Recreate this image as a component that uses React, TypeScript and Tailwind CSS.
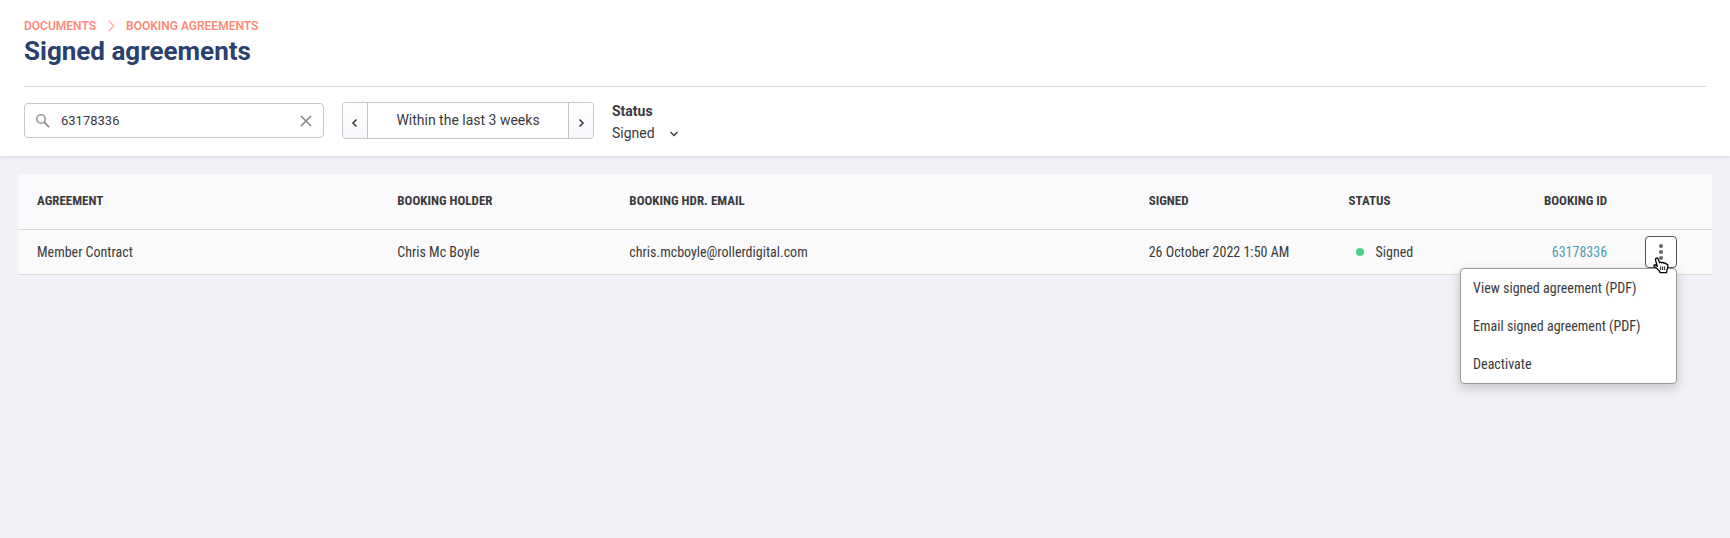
import { useState } from "react";

interface Agreement {
  name: string;
  holder: string;
  email: string;
  signed: string;
  status: string;
  bookingID: string;
}

const agreements: Agreement[] = [
  {
    name: "Member Contract",
    holder: "Chris Mc Boyle",
    email: "chris.mcboyle@rollerdigital.com",
    signed: "26 October 2022 1:50 AM",
    status: "Signed",
    bookingID: "63178336",
  },
];

const actions = [
  "View signed agreement (PDF)",
  "Email signed agreement (PDF)",
  "Deactivate",
];

function Chevron({ className, d }: { className: string; d: string }) {
  return (
    <svg
      viewBox="0 0 12 12"
      fill="none"
      stroke="currentColor"
      className={className}
      aria-hidden="true"
    >
      <path d={d} />
    </svg>
  );
}

function HandCursor() {
  return (
    <svg
      viewBox="0 0 16 17"
      className="pointer-events-none absolute top-5 left-2 z-20 h-[18px] w-4"
      aria-hidden="true"
    >
      <path
        d="M4.3 9.8 2.7 4.2C2 1.6 4.3.4 5.2 2.6L6.6 6.4c.4-1.1 1.8-1 2.2 0 .5-.8 1.8-.6 2.1.4.8-.6 2-.2 2.2.9.9-.3 1.8.3 1.8 1.5.1 1.9-.4 3-1 4.4l-.3 2.6H7l-.4-1.6C5.2 13.2 3.8 11.6 1.3 10 .5 9.1 1.3 7.9 2.5 8.4z"
        fill="#fff"
        stroke="#000"
        strokeWidth="1.3"
        strokeLinejoin="round"
      />
      <path d="M7.7 10v3.5M9.7 10v3.5M11.7 10v3.5" stroke="#000" strokeWidth=".9" />
    </svg>
  );
}

function Header() {
  const [search, setSearch] = useState("63178336");

  return (
    <header className="relative bg-white px-6 pt-4 shadow-[0_1px_4px_rgba(40,45,80,0.16)]">
      <nav className="flex items-center text-xs leading-5 font-semibold text-[#ff8a7a] uppercase">
        <a href="#documents">Documents</a>
        <Chevron className="mx-2 size-3.5 text-[#ffa79b]" d="M4 1.5 8.5 6 4 10.5" />
        <a href="#booking-agreements">Booking agreements</a>
      </nav>
      <h1 className="text-[26px] leading-[30px] font-bold text-[#2a406e]">
        Signed agreements
      </h1>
      <div className="mt-5 flex h-[70px] items-center border-t border-[#d9dadc] pb-0.5">
        <label className="flex h-[35px] w-[300px] items-center rounded border border-[#c6c6c8] px-[11px]">
          <svg viewBox="0 0 14 14" fill="none" stroke="#999" className="size-3.5 shrink-0" aria-hidden="true">
            <circle cx="5" cy="5" r="4.2" strokeWidth="1.6" />
            <path d="m8 8 5.2 5.2" strokeWidth="2" />
          </svg>
          <input
            type="text"
            aria-label="Search agreements"
            value={search}
            onChange={(e) => setSearch(e.target.value)}
            className="ml-[11px] min-w-0 flex-1 text-[13px] outline-none"
          />
          <button type="button" aria-label="Clear search" onClick={() => setSearch("")}>
            <Chevron className="size-3 stroke-[1.6] text-[#888]" d="m1 1 10 10M11 1 1 11" />
          </button>
        </label>
        <div className="ml-[18px] flex h-[37px] w-[252px] overflow-hidden rounded border border-[#c6c6c8]">
          <button
            type="button"
            aria-label="Previous period"
            className="flex w-[25px] items-center justify-center border-r border-[#c6c6c8] bg-linear-to-b from-white to-[#f6f7fb]"
          >
            <Chevron className="mt-1 size-3 stroke-[1.6]" d="M7.5 2.5 4 6l3.5 3.5" />
          </button>
          <button type="button" className="flex-1 pb-0.5 text-sm">
            Within the last 3 weeks
          </button>
          <button
            type="button"
            aria-label="Next period"
            className="flex w-[25px] items-center justify-center border-l border-[#c6c6c8] bg-linear-to-b from-white to-[#f6f7fb]"
          >
            <Chevron className="mt-1 size-3 stroke-[1.6]" d="M4.5 2.5 8 6 4.5 9.5" />
          </button>
        </div>
        <div className="ml-[18px] flex flex-col pt-0.5 text-sm leading-[22px]">
          <label htmlFor="status" className="font-bold">
            Status
          </label>
          <div className="relative w-[68px]">
            <select id="status" className="w-full appearance-none outline-none">
              <option>Signed</option>
              <option>Unsigned</option>
            </select>
            <Chevron
              className="pointer-events-none absolute top-1.5 right-0 size-3 stroke-[1.4]"
              d="M2.5 4 6 7.5 9.5 4"
            />
          </div>
        </div>
      </div>
    </header>
  );
}

function ActionMenu() {
  const [open, setOpen] = useState(true);

  return (
    <div className="relative ml-7 size-8">
      <button
        type="button"
        aria-label="Agreement actions"
        aria-expanded={open}
        onClick={() => setOpen(!open)}
        className="flex size-8 items-center justify-center rounded border border-[#555] bg-white"
      >
        <svg viewBox="0 0 4 16" fill="#666" className="h-4 w-1" aria-hidden="true">
          <circle cx="2" cy="2" r="2" />
          <circle cx="2" cy="8" r="2" />
          <circle cx="2" cy="14" r="2" />
        </svg>
      </button>
      <HandCursor />
      {open && (
        <div
          role="menu"
          className="absolute top-8 right-0 z-10 w-[217px] rounded border border-[#999] bg-white shadow-[0_4px_12px_rgba(0,0,0,0.2)]"
        >
          {actions.map((action) => (
            <button
              key={action}
              type="button"
              role="menuitem"
              className="block h-[38px] w-full px-3 text-left"
            >
              {action}
            </button>
          ))}
        </div>
      )}
    </div>
  );
}

export default function App() {
  return (
    <div className="min-h-screen bg-[#f1f2f8] font-[Roboto,'Liberation_Sans',sans-serif] text-[#3a3a3c]">
      <Header />
      <main className="p-[18px]">
        <table className="w-full table-fixed text-left font-['Roboto_Condensed','Roboto','Liberation_Sans',sans-serif] text-sm">
          <thead className="bg-[#fafafd] text-[13px] uppercase">
            <tr className="h-[55px] border-b border-[#d9dadc]">
              <th className="w-[21.8%] pl-[19px]">Agreement</th>
              <th className="w-[13.7%] pl-2.5">Booking holder</th>
              <th className="w-[30.6%] pl-2.5">Booking hdr. email</th>
              <th className="w-[11.8%] pl-[11px]">Signed</th>
              <th className="w-[7.7%] pl-[11px]">Status</th>
              <th className="w-[8.8%] pr-2.5 text-right">Booking ID</th>
              <th className="w-[5.6%]" aria-label="Actions"></th>
            </tr>
          </thead>
          <tbody>
            {agreements.map((a) => (
              <tr key={a.bookingID} className="h-[45px] border-b border-[#d9dadc] bg-[#fafafa]">
                <td className="pl-[19px]">{a.name}</td>
                <td className="pl-2.5">{a.holder}</td>
                <td className="pl-2.5">{a.email}</td>
                <td className="pl-[11px] whitespace-nowrap">{a.signed}</td>
                <td className="pl-[11px]">
                  <span className="flex items-center">
                    <span className="mr-3 ml-[7px] size-2 rounded-full bg-[#4bd08b]"></span>
                    {a.status}
                  </span>
                </td>
                <td className="pr-2.5 text-right">
                  <a href={`#booking-${a.bookingID}`} className="text-[#4a9fb5]">
                    {a.bookingID}
                  </a>
                </td>
                <td>
                  <ActionMenu />
                </td>
              </tr>
            ))}
          </tbody>
        </table>
      </main>
    </div>
  );
}
